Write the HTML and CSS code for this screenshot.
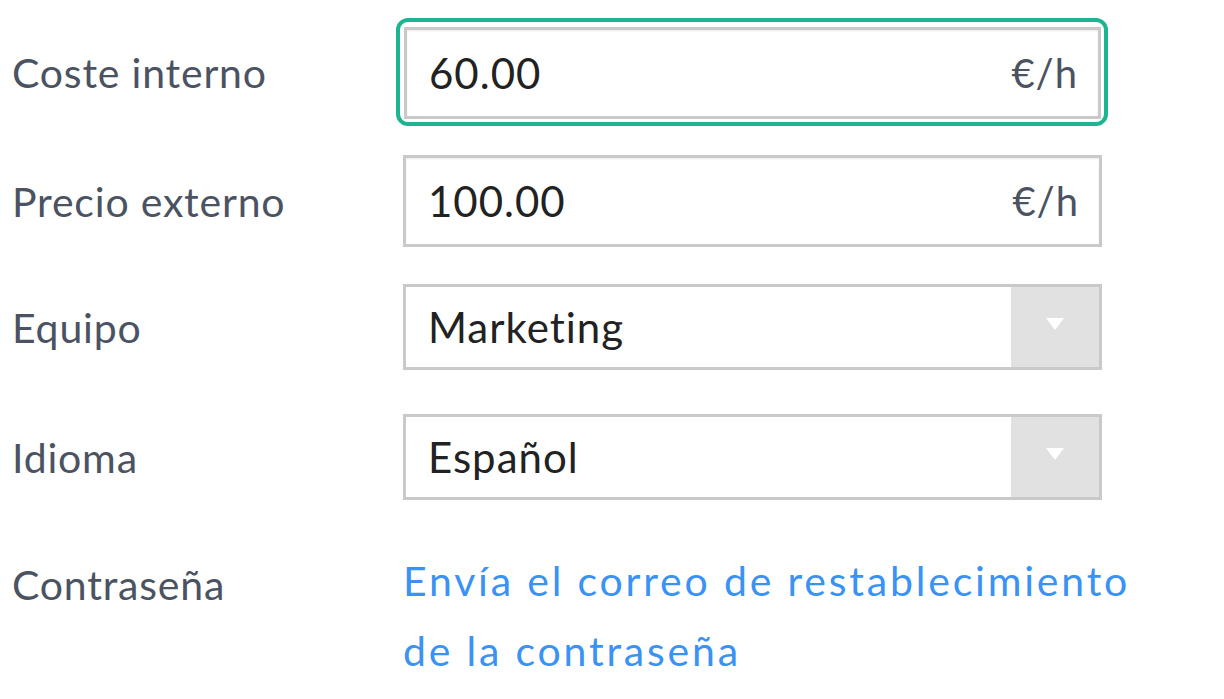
FILE: index.html
```html
<!DOCTYPE html>
<html lang="es">
<head>
    <meta charset="UTF-8">
    <meta name="viewport" content="width=device-width, initial-scale=1.0">
    <title>Perfil de usuario</title>
    <link rel="stylesheet" href="styles.css">
</head>
<body>

    <div class="form">
        <div class="row row-first">
            <label class="label">Coste interno</label>
            <div class="focus-ring">
                <div class="field">
                    <span class="value">60.00</span>
                    <span class="unit">€/h</span>
                </div>
            </div>
        </div>

        <div class="row">
            <label class="label">Precio externo</label>
            <div class="field">
                <span class="value">100.00</span>
                <span class="unit">€/h</span>
            </div>
        </div>

        <div class="row">
            <label class="label">Equipo</label>
            <div class="field select">
                <span class="value">Marketing</span>
                <span class="arrow"></span>
            </div>
        </div>

        <div class="row row-gap">
            <label class="label">Idioma</label>
            <div class="field select">
                <span class="value">Español</span>
                <span class="arrow"></span>
            </div>
        </div>

        <div class="row row-link">
            <label class="label">Contraseña</label>
            <a class="link" href="#">Envía el correo de restablecimiento de la contraseña</a>
        </div>
    </div>

</body>
</html>
```

FILE: styles.css
```css
body {
    font-family: Lato, 'Open Sans', sans-serif;
    background-color: #ffffff;
    margin: 0;
    padding: 0;
}

.form {
    padding: 18px 0 0 12px;
}

.row {
    display: grid;
    grid-template-columns: 391px 699px;
    align-items: center;
    margin-bottom: 37px;
}

.row-first {
    grid-template-columns: 384px 712px;
    margin-bottom: 29px;
}

.row-gap {
    margin-top: 44px;
}

.label {
    font-size: 41px;
    letter-spacing: 0.8px;
    color: #4b5362;
}

.focus-ring {
    border: 4px solid #1db492;
    border-radius: 12px;
    padding: 5px 3px 3px 4px;
}

.field {
    display: flex;
    align-items: center;
    justify-content: space-between;
    height: 86px;
    border: 3px solid #c9c9c9;
    box-shadow: inset 0 1px 2px rgba(0, 0, 0, 0.08);
    padding-left: 22px;
    background-color: #ffffff;
}

.value {
    font-size: 42px;
    letter-spacing: 1px;
    color: #222222;
}

.unit {
    font-size: 40px;
    letter-spacing: 1px;
    color: #4b5362;
    padding-right: 20px;
}

.select {
    height: 80px;
    box-shadow: none;
}

.arrow {
    align-self: stretch;
    width: 88px;
    background-color: #e1e1e1;
    display: flex;
    align-items: center;
    justify-content: center;
}

.arrow::after {
    content: "";
    border-left: 9px solid transparent;
    border-right: 9px solid transparent;
    border-top: 12px solid #ffffff;
    margin-top: -6px;
}

.row-link {
    align-items: start;
    margin-top: 60px;
}

.link {
    width: 780px;
    font-size: 41px;
    line-height: 70px;
    letter-spacing: 2.8px;
    color: #3a92f4;
    text-decoration: none;
    margin-top: -14px;
}
```
